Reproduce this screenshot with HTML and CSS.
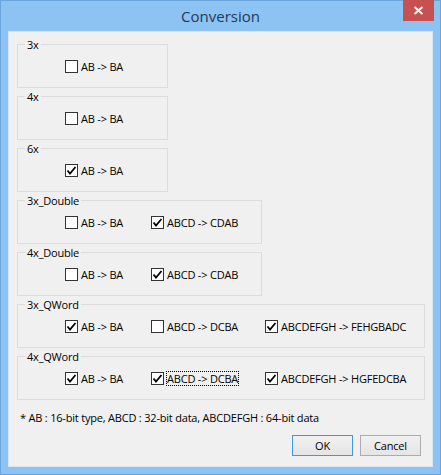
FILE: index.html
```html
<!DOCTYPE html>
<html>
<head>
<meta charset="utf-8">
<link rel="stylesheet" href="styles.css">
</head>
<body>
<div class="window">
  <div class="titlebar">
    <span class="title">Conversion</span>
    <span class="close">
      <svg width="11" height="9" viewBox="0 0 11 9"><path d="M1.5 1 L9.5 8 M9.5 1 L1.5 8" stroke="#fff" stroke-width="2" fill="none"/></svg>
    </span>
  </div>
  <div class="client">
    <div class="groups">
      <div class="group w1">
        <span class="legend">3x</span>
        <label class="item"><span class="box"></span><span class="text">AB -&gt; BA</span></label>
      </div>
      <div class="group w1">
        <span class="legend">4x</span>
        <label class="item"><span class="box"></span><span class="text">AB -&gt; BA</span></label>
      </div>
      <div class="group w1">
        <span class="legend">6x</span>
        <label class="item"><span class="box checked"><svg viewBox="0 0 11 11"><path d="M1.5 5.5 L4 8.5 L9.5 2"/></svg></span><span class="text">AB -&gt; BA</span></label>
      </div>
      <div class="group w2">
        <span class="legend">3x_Double</span>
        <label class="item"><span class="box"></span><span class="text">AB -&gt; BA</span></label>
        <label class="item"><span class="box checked"><svg viewBox="0 0 11 11"><path d="M1.5 5.5 L4 8.5 L9.5 2"/></svg></span><span class="text">ABCD -&gt; CDAB</span></label>
      </div>
      <div class="group w2">
        <span class="legend">4x_Double</span>
        <label class="item"><span class="box"></span><span class="text">AB -&gt; BA</span></label>
        <label class="item"><span class="box checked"><svg viewBox="0 0 11 11"><path d="M1.5 5.5 L4 8.5 L9.5 2"/></svg></span><span class="text">ABCD -&gt; CDAB</span></label>
      </div>
      <div class="group w3">
        <span class="legend">3x_QWord</span>
        <label class="item"><span class="box checked"><svg viewBox="0 0 11 11"><path d="M1.5 5.5 L4 8.5 L9.5 2"/></svg></span><span class="text">AB -&gt; BA</span></label>
        <label class="item"><span class="box"></span><span class="text">ABCD -&gt; DCBA</span></label>
        <label class="item"><span class="box checked"><svg viewBox="0 0 11 11"><path d="M1.5 5.5 L4 8.5 L9.5 2"/></svg></span><span class="text">ABCDEFGH -&gt; FEHGBADC</span></label>
      </div>
      <div class="group w3">
        <span class="legend">4x_QWord</span>
        <label class="item"><span class="box checked"><svg viewBox="0 0 11 11"><path d="M1.5 5.5 L4 8.5 L9.5 2"/></svg></span><span class="text">AB -&gt; BA</span></label>
        <label class="item"><span class="box checked"><svg viewBox="0 0 11 11"><path d="M1.5 5.5 L4 8.5 L9.5 2"/></svg></span><span class="text focus">ABCD -&gt; DCBA</span></label>
        <label class="item"><span class="box checked"><svg viewBox="0 0 11 11"><path d="M1.5 5.5 L4 8.5 L9.5 2"/></svg></span><span class="text">ABCDEFGH -&gt; HGFEDCBA</span></label>
      </div>
    </div>
    <p class="note">* AB : 16-bit type, ABCD : 32-bit data, ABCDEFGH : 64-bit data</p>
    <div class="buttons">
      <button class="btn default">OK</button>
      <button class="btn">Cancel</button>
    </div>
  </div>
</div>
</body>
</html>
```
FILE: styles.css
```css
html, body {
  margin: 0;
  padding: 0;
}
body {
  width: 441px;
  height: 475px;
  font-family: "Open Sans", "Noto Sans", sans-serif;
  font-size: 11px;
  letter-spacing: -0.2px;
  color: #000;
}
.window {
  box-sizing: border-box;
  width: 441px;
  height: 475px;
  background: #8dc3f2;
  border: 1px solid #6aa6dc;
  padding: 0 7px 7px 7px;
  display: flex;
  flex-direction: column;
}
.titlebar {
  height: 30px;
  flex: none;
  position: relative;
  display: flex;
  justify-content: center;
  align-items: center;
}
.title {
  font-size: 15px;
  letter-spacing: 0;
  color: #1e3a5b;
  margin-top: 0;
}
.close {
  position: absolute;
  right: -1px;
  top: -1px;
  width: 31px;
  height: 21px;
  background: #c75050;
  display: flex;
  align-items: center;
  justify-content: center;
}
.close svg { display: block; }
.client {
  flex: 1;
  background: #f0f0f0;
  border: 1px solid #d9e6f2;
  padding: 12px 11px 10px 8px;
  display: flex;
  flex-direction: column;
}
.groups {
  display: flex;
  flex-direction: column;
  gap: 8px;
}
.group {
  position: relative;
  box-sizing: border-box;
  height: 44px;
  border: 1px solid #dcdcdc;
  display: grid;
  grid-template-columns: 86px 114px auto;
  align-content: start;
  padding: 15px 0 0 47px;
}
.w1 { width: 151px; }
.w2 { width: 245px; }
.w3 { width: 408px; }
.legend {
  position: absolute;
  left: 7px;
  top: -8px;
  padding: 0 2px;
  background: #f0f0f0;
  line-height: 16px;
}
.item {
  display: flex;
  align-items: center;
  height: 13px;
}
.box {
  box-sizing: border-box;
  width: 13px;
  height: 13px;
  border: 1px solid #333;
  background: #fff;
  flex: none;
  display: flex;
}
.box svg {
  width: 11px;
  height: 11px;
  fill: none;
  stroke: #000;
  stroke-width: 1.8;
}
.text {
  margin-left: 3px;
  line-height: 13px;
  white-space: nowrap;
}
.focus {
  outline: 1px dotted #000;
  outline-offset: 0;
}
.note {
  margin: 10px 0 0 3px;
  line-height: 16px;
}
.buttons {
  margin-top: auto;
  display: flex;
  justify-content: flex-end;
  gap: 7px;
}
.btn {
  box-sizing: border-box;
  width: 61px;
  height: 21px;
  font-family: "Open Sans", "Noto Sans", sans-serif;
  font-size: 11px;
  letter-spacing: -0.2px;
  color: #000;
  background: linear-gradient(#f0f0f0, #e5e5e5);
  border: 1px solid #acacac;
  padding: 0;
  margin: 0;
}
.btn.default {
  border-color: #3c9be0;
}
```
